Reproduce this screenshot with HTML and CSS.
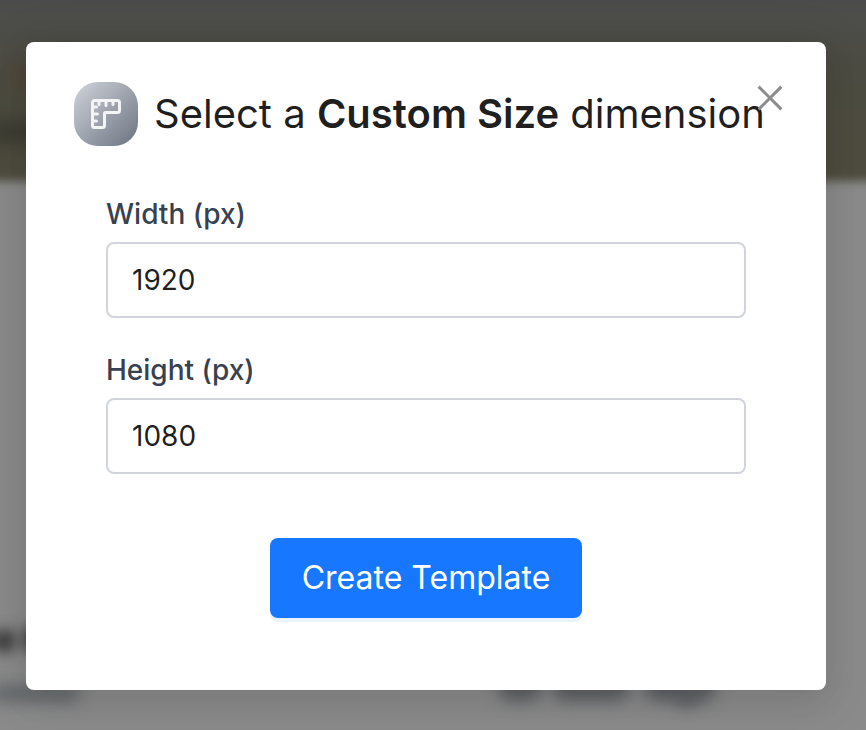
FILE: index.html
```html
<!DOCTYPE html>
<html lang="en">
<head>
<meta charset="utf-8">
<title>Custom Size</title>
<link rel="stylesheet" href="styles.css">
</head>
<body>
<div class="backdrop" aria-hidden="true">
  <div class="hero"></div>
  <span class="smudge accent"></span>
  <span class="smudge hero-line"></span>
  <span class="smudge heading"></span>
  <span class="smudge heading-end"></span>
  <span class="smudge caption"></span>
  <span class="smudge word-one"></span>
  <span class="smudge word-two"></span>
  <span class="smudge word-three"></span>
  <span class="smudge descender"></span>
</div>
<main class="modal" role="dialog" aria-labelledby="title">
  <button class="close" aria-label="Close">
    <svg viewBox="0 0 28 28" width="28" height="28"><path d="M2.6 2.6 25.4 25.4M25.4 2.6 2.6 25.4"/></svg>
  </button>
  <header class="header">
    <span class="badge">
      <svg viewBox="0 0 32 32" width="32" height="32">
        <path d="M4.500 2.500H27.500a2 2 0 0 1 2 2V12.500a2 2 0 0 1-2 2H15.500a1 1 0 0 0-1 1V27.500a2 2 0 0 1-2 2H4.500a2 2 0 0 1-2-2V4.500a2 2 0 0 1 2-2Z"/>
        <path d="M9 3V6.500M16 3V7.500M23 3V6.500M3 9H6.500M3 16H7.500M3 23H6.500"/>
      </svg>
    </span>
    <h1 class="title" id="title">Select a <strong>Custom Size</strong> dimension</h1>
  </header>
  <form class="form">
    <label class="field"><span class="label">Width (px)</span><input class="input" type="text" value="1920"></label>
    <label class="field"><span class="label">Height (px)</span><input class="input" type="text" value="1080"></label>
    <button class="submit" type="button">Create Template</button>
  </form>
</main>
</body>
</html>
```
FILE: styles.css
```css
* { box-sizing: border-box; }
body {
  margin: 0;
  height: 730px;
  overflow: hidden;
  padding: 42px 40px 40px 26px;
  background: #8b8b8b;
  font-family: Inter, sans-serif;
  color: rgba(0, 0, 0, 0.88);
}
.backdrop { position: absolute; inset: 0; overflow: hidden; }
.hero {
  height: 221px;
  margin: -40px -30px 0;
  background: linear-gradient(#4b4b4b 40px, #4d4d4a 60px, #4d4c42 110px, #4e4c3d 221px);
  filter: blur(5px);
}
.smudge { position: absolute; border-radius: 8px; filter: blur(9px); }
.accent { left: 14px; top: 66px; width: 24px; height: 22px; background: #573f28; opacity: 0.65; }
.hero-line { left: -10px; top: 122px; width: 50px; height: 20px; background: #37372f; opacity: 0.9; }
.heading { left: -8px; top: 630px; width: 24px; height: 22px; background: #3c3c3c; filter: blur(7px); }
.heading-end { left: 23px; top: 626px; width: 20px; height: 26px; background: #3c3c3c; filter: blur(7px); }
.caption { left: -10px; top: 685px; width: 90px; height: 17px; background: #62666a; filter: blur(8px); }
.word-one, .word-two, .word-three { top: 676px; height: 25px; background: #5b5e62; filter: blur(8px); }
.word-one { left: 500px; width: 40px; }
.word-two { left: 554px; width: 74px; }
.word-three { left: 646px; width: 68px; }
.descender { left: 675px; top: 690px; width: 24px; height: 18px; background: #5e6165; filter: blur(7px); opacity: 0.8; }
.modal {
  position: relative;
  width: 800px;
  height: 648px;
  padding: 40px 48px;
  background: #fff;
  border-radius: 8px;
  box-shadow: 0 6px 32px rgba(0, 0, 0, 0.1), 0 12px 56px 12px rgba(0, 0, 0, 0.06);
}
.close { position: absolute; top: 42px; right: 42px; width: 28px; height: 28px; padding: 0; border: 0; background: none; }
.close svg { display: block; fill: none; stroke: #8c8c8c; stroke-width: 3; }
.header { display: flex; align-items: center; gap: 16px; height: 64px; }
.badge {
  display: grid;
  place-items: center;
  flex: none;
  width: 64px;
  height: 64px;
  border-radius: 24px;
  background: linear-gradient(135deg, #d1d5db, #6b7280);
}
.badge svg { fill: none; stroke: #f3f4f6; stroke-width: 3; stroke-linecap: round; stroke-linejoin: round; }
.title { margin: 0; font-size: 40px; line-height: 56px; font-weight: 400; white-space: nowrap; }
.title strong { font-weight: 600; }
.form { display: flex; flex-direction: column; gap: 32px; padding: 48px 32px 0; }
.field { display: flex; flex-direction: column; gap: 8px; }
.label { font-size: 28px; line-height: 40px; font-weight: 500; color: #374151; }
.input {
  width: 100%;
  height: 76px;
  padding: 0 24px;
  border: 2px solid #d1d5db;
  border-radius: 8px;
  background: #fff;
  font: 400 28px/44px Inter, sans-serif;
  color: inherit;
}
.submit {
  align-self: center;
  width: 312px;
  height: 80px;
  margin-top: 32px;
  padding: 0;
  border: 0;
  border-radius: 8px;
  background: #1777ff;
  box-shadow: 0 4px 0 #e9f4ff;
  font: 400 32px/48px Inter, sans-serif;
  color: #fff;
}
```
